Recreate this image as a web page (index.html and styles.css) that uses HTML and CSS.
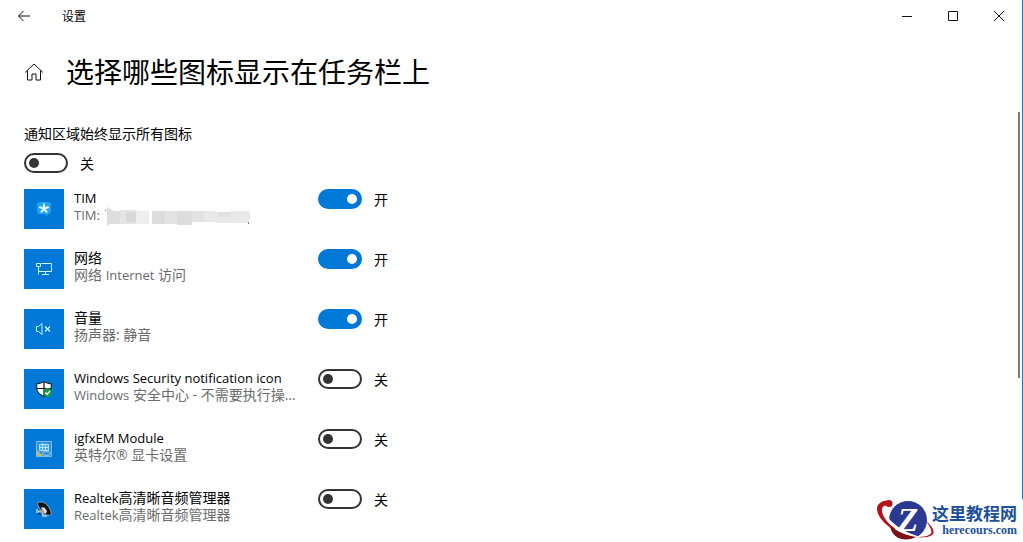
FILE: index.html
```html
<!DOCTYPE html>
<html lang="zh-CN">
<head>
    <meta charset="UTF-8">
    <meta name="viewport" content="width=device-width, initial-scale=1.0">
    <title>设置</title>
    <link rel="stylesheet" href="styles.css">
</head>
<body>
    <div class="window">
        <header class="titlebar">
            <button type="button" class="title-btn back" aria-label="返回">
                <svg width="14" height="12" viewBox="0 0 14 12"><path d="M13 6H1.5M6.5 1L1.5 6l5 5"/></svg>
            </button>
            <span class="title">设置</span>
            <div class="window-controls">
                <button type="button" class="title-btn" aria-label="最小化">
                    <svg width="10" height="10" viewBox="0 0 10 10"><path d="M0 5.5h10"/></svg>
                </button>
                <button type="button" class="title-btn" aria-label="最大化">
                    <svg width="10" height="10" viewBox="0 0 10 10"><path d="M.5.5h9v9h-9z"/></svg>
                </button>
                <button type="button" class="title-btn" aria-label="关闭">
                    <svg width="10" height="10" viewBox="0 0 10 10"><path d="M0 0l10 10M10 0L0 10"/></svg>
                </button>
            </div>
        </header>

        <main>
            <div class="page-head">
                <a href="#" class="home" aria-label="主页">
                    <svg width="20" height="18" viewBox="0 0 20 18"><path d="M1 9.5L10 1l9 8.5M3.5 7.5v9.5H8v-6h4v6h4.500V7.500"/></svg>
                </a>
                <h1>选择哪些图标显示在任务栏上</h1>
            </div>

            <section class="all-icons">
                <label for="all">通知区域始终显示所有图标</label>
                <div class="switch">
                    <input type="checkbox" id="all">
                    <span>关</span>
                </div>
            </section>

            <ul class="icon-list">
                <li>
                    <div class="tile">
                        <svg width="16" height="16" viewBox="0 0 16 16">
                            <path fill="#1ba4f5" d="M4 1h8a3 3 0 0 1 3 3v6a3 3 0 0 1-3 3l-1 2-3-2H4a3 3 0 0 1-3-3V4a3 3 0 0 1 3-3z"/>
                            <path stroke="#e8fbff" stroke-width="2" d="M8 7.500V2.500M8 7.500L3.200 6M8 7.500L12.800 6M8 7.500l-3 4M8 7.500l3 4"/>
                        </svg>
                    </div>
                    <label class="info" for="tim">
                        <span class="name"><span class="en">TIM</span></span>
                        <span class="desc masked"><span class="en">TIM:</span>
                            <svg width="148" height="20" viewBox="0 0 148 20">
                                <path fill="#dedede" d="M3 1l7 4h7v13H6l-3 2z"/>
                                <path fill="#e5e5e5" d="M16 4h17v14H16z"/>
                                <path fill="#d9d9d9" d="M22 6h10v10H22z"/>
                                <path fill="#eee" d="M32 5h13v13H32z"/>
                                <path fill="#dcdcdc" d="M48 5h13v13H48zM73 5h15v14H73z"/>
                                <path fill="#e3e3e3" d="M61 5h12v13H61zM88 5h12v11H88z"/>
                                <path fill="#e9e9e9" d="M100 5h12v11h-12zM112 6h14v11h-14zM126 5h19l2 6-4 6h-17z"/>
                                <path fill="#e0e0e0" d="M114 6h12v5h-12z"/>
                                <path fill="#777" d="M1 4h1v1H1zM144 16h1v2h-1z"/>
                            </svg>
                        </span>
                    </label>
                    <div class="switch"><input type="checkbox" id="tim" checked><span>开</span></div>
                </li>
                <li>
                    <div class="tile">
                        <svg width="16" height="16" viewBox="0 0 16 16">
                            <path stroke="#c9fbff" d="M5.500 2.500h10v8H3M.5 2.500h4v3h-4zM2.500 6v7.500M9.500 10.500v3M6 13.500h7"/>
                        </svg>
                    </div>
                    <label class="info" for="network">
                        <span class="name">网络</span>
                        <span class="desc">网络 <span class="en">Internet</span> 访问</span>
                    </label>
                    <div class="switch"><input type="checkbox" id="network" checked><span>开</span></div>
                </li>
                <li>
                    <div class="tile">
                        <svg width="16" height="16" viewBox="0 0 16 16">
                            <path stroke="#c9fbff" d="M.5 5.500h2l3.500-3v11l-3.500-3h-2z"/>
                            <path stroke="#c9fbff" stroke-width="1.300" d="M9 5.500l5 5M14 5.500l-5 5"/>
                        </svg>
                    </div>
                    <label class="info" for="volume">
                        <span class="name">音量</span>
                        <span class="desc">扬声器: 静音</span>
                    </label>
                    <div class="switch"><input type="checkbox" id="volume" checked><span>开</span></div>
                </li>
                <li>
                    <div class="tile">
                        <svg width="16" height="16" viewBox="0 0 16 16">
                            <path fill="#fff" stroke="#111" d="M8 .5C6 2 3.500 2.600.8 2.700V7c0 4 3 6.500 7.200 8.500 4.200-2 7.200-4.500 7.200-8.500V2.700C12.500 2.600 10 2 8 .5z"/>
                            <path stroke="#111" stroke-width="1.200" d="M8 1v14M1 7.500h14"/>
                            <circle fill="#149a4a" cx="11.500" cy="11.500" r="4.500"/>
                            <path stroke="#fff" stroke-width="1.300" d="M9.300 11.500l1.700 1.700 3-3.200"/>
                        </svg>
                    </div>
                    <label class="info" for="security">
                        <span class="name"><span class="en">Windows Security notification icon</span></span>
                        <span class="desc"><span class="en">Windows</span> 安全中心 - 不需要执行操作。</span>
                    </label>
                    <div class="switch"><input type="checkbox" id="security"><span>关</span></div>
                </li>
                <li>
                    <div class="tile">
                        <svg width="16" height="16" viewBox="0 0 16 16">
                            <path fill="#2f93e2" stroke="#79bdea" d="M.5.5h15v15H.5z"/>
                            <path fill="#45a9e8" stroke="#b5e0fa" d="M3.500 3.500h9v6h-9z"/>
                            <path stroke="#b5e0fa" d="M6.500 2v8M3 6.500h10M9.500 4v5"/>
                            <path fill="#c3b76a" d="M1 9l6 6H1z"/>
                            <ellipse fill="#2189d8" stroke="#a8d8f5" cx="10.500" cy="12.500" rx="4" ry="1.800"/>
                        </svg>
                    </div>
                    <label class="info" for="igfx">
                        <span class="name"><span class="en">igfxEM Module</span></span>
                        <span class="desc">英特尔® 显卡设置</span>
                    </label>
                    <div class="switch"><input type="checkbox" id="igfx"><span>关</span></div>
                </li>
                <li>
                    <div class="tile">
                        <svg width="16" height="16" viewBox="0 0 16 16">
                            <path fill="#111" stroke="#aebbc8" stroke-width=".8" d="M2 1.500c4-1.500 8.500.5 11 5 2 3.500 3 6.500 1.500 7.500C11 15 6.500 12 4 8 2.300 5.500.8 3 2 1.500z"/>
                            <path fill="#dfe3e8" d="M5 6.500l3.500 0 2.500 3.500-1 2.500-3-1z"/>
                            <path stroke="#c8ced6" stroke-width="1.500" d="M1 8v4M2 10.500h4M6 11l1 4h4"/>
                            <circle fill="#c79a86" cx="6.500" cy="10.500" r="1.800"/>
                            <path stroke="#222" d="M2 12.500l3 1"/>
                        </svg>
                    </div>
                    <label class="info" for="realtek">
                        <span class="name"><span class="en">Realtek</span>高清晰音频管理器</span>
                        <span class="desc"><span class="en">Realtek</span>高清晰音频管理器</span>
                    </label>
                    <div class="switch"><input type="checkbox" id="realtek"><span>关</span></div>
                </li>
            </ul>
        </main>
        <div class="scrollbar"></div>
    </div>

    <!-- Логотип сайта поверх окна -->
    <div class="watermark">
        <svg width="60" height="42" viewBox="0 0 60 42">
            <circle fill="#2b3990" cx="32" cy="21" r="19"/>
            <text class="logo-letter" x="32" y="32" text-anchor="middle">Z</text>
            <path fill="#fff" d="M7 10c4 11 18 23 38 28l-3 4C26 39 12 29 5 16z"/>
            <path fill="#b5121b" d="M13 1.500C7 1 1 4 1 10c0 7 8 16 17 21l1-1.500C11 24 5.500 16 6 10.500 6.500 6.500 9 6 13 7z"/>
            <circle fill="#b5121b" cx="13" cy="4.500" r="3.500"/>
            <path fill="#7d1116" d="M14 27c8 6 17 9.500 26 11-7 4-23 5-26-11z"/>
            <path fill="#b5121b" d="M50 22c6 5 9 10 7 13-2 3-9 4-17 3 8 0 13-1 15-3.500 1.500-2.500-1-7-5-12.500z"/>
        </svg>
        <div class="watermark-text">
            <strong>这里教程网</strong>
            <span>herecours.com</span>
        </div>
    </div>
</body>
</html>
```
FILE: styles.css
```css
* {
    margin: 0;
    padding: 0;
    box-sizing: border-box;
}

body {
    font-family: 'Noto Sans CJK SC', sans-serif;
    font-size: 14px;
    line-height: 18px;
    color: #000;
    background-color: #fff;
    overflow: hidden;
}

svg {
    display: block;
    fill: none;
}

.en {
    font-family: 'Open Sans', sans-serif;
    font-size: 13px;
}

.window {
    position: relative;
    height: 100vh;
    border-right: 1px solid #2a7ab8;
    overflow: hidden;
}

/* Заголовок окна */
.titlebar {
    display: flex;
    align-items: center;
    height: 32px;
}

.title-btn {
    display: flex;
    align-items: center;
    justify-content: center;
    width: 46px;
    height: 32px;
    border: 0;
    background: none;
}

.title-btn svg,
.home svg {
    stroke: #111;
}

.back {
    width: 48px;
}

.title {
    margin-left: 14px;
    font-size: 12px;
}

.window-controls {
    display: flex;
    margin-left: auto;
}

/* Содержимое страницы */
main {
    padding: 16px 24px 0;
}

.page-head {
    display: flex;
    align-items: center;
    gap: 22px;
    height: 48px;
}

h1 {
    font-size: 28px;
    font-weight: 400;
    line-height: 46px;
    padding-bottom: 2px;
}

.all-icons {
    padding-top: 28px;
}

.all-icons label {
    display: block;
    margin-bottom: 11px;
}

/* Переключатели */
.switch {
    display: flex;
    align-items: center;
    gap: 12px;
    height: 20px;
}

.switch input {
    display: flex;
    align-items: center;
    width: 44px;
    height: 20px;
    padding: 0 3px;
    border: 2px solid #333;
    border-radius: 10px;
    background: #fff;
    appearance: none;
}

.switch input::before {
    content: '';
    width: 10px;
    height: 10px;
    border-radius: 50%;
    background: #333;
}

.switch input:checked {
    justify-content: flex-end;
    border-color: #0078d7;
    background: #0078d7;
}

.switch input:checked::before {
    background: #fff;
}

/* Список значков */
.icon-list {
    display: grid;
    gap: 20px;
    padding-top: 16px;
    list-style: none;
}

.icon-list li {
    display: flex;
    height: 40px;
}

.tile {
    display: flex;
    align-items: center;
    justify-content: center;
    width: 40px;
    height: 40px;
    background: #0078d7;
}

.info {
    width: 226px;
    margin: -1px 18px 0 10px;
}

.name,
.desc {
    display: block;
    height: 18px;
    overflow: hidden;
    white-space: nowrap;
    text-overflow: ellipsis;
}

.desc {
    font-family: 'Open Sans', 'Noto Sans CJK SC', sans-serif;
    color: #6b6b6b;
}

.masked {
    display: flex;
    gap: 4px;
    height: 20px;
}

.scrollbar {
    position: absolute;
    top: 112px;
    right: 2px;
    width: 2px;
    height: 266px;
    background: #7a7a7a;
}

/* Логотип */
.watermark {
    position: fixed;
    right: 0;
    bottom: 0;
    display: flex;
    width: 147px;
    height: 43px;
    background: #fff;
}

.watermark-text {
    display: flex;
    flex-direction: column;
    align-items: flex-end;
    margin-left: -4px;
    padding-top: 4px;
    color: #1c4f9c;
    white-space: nowrap;
}

.watermark-text strong {
    font-size: 17px;
    line-height: 20px;
}

.watermark-text span {
    font-family: 'Liberation Serif', serif;
    font-size: 12px;
    font-weight: 700;
    line-height: 14px;
}

.logo-letter {
    font-family: 'Liberation Serif', serif;
    font-size: 34px;
    font-style: italic;
    font-weight: 700;
    fill: #fff;
}
```
